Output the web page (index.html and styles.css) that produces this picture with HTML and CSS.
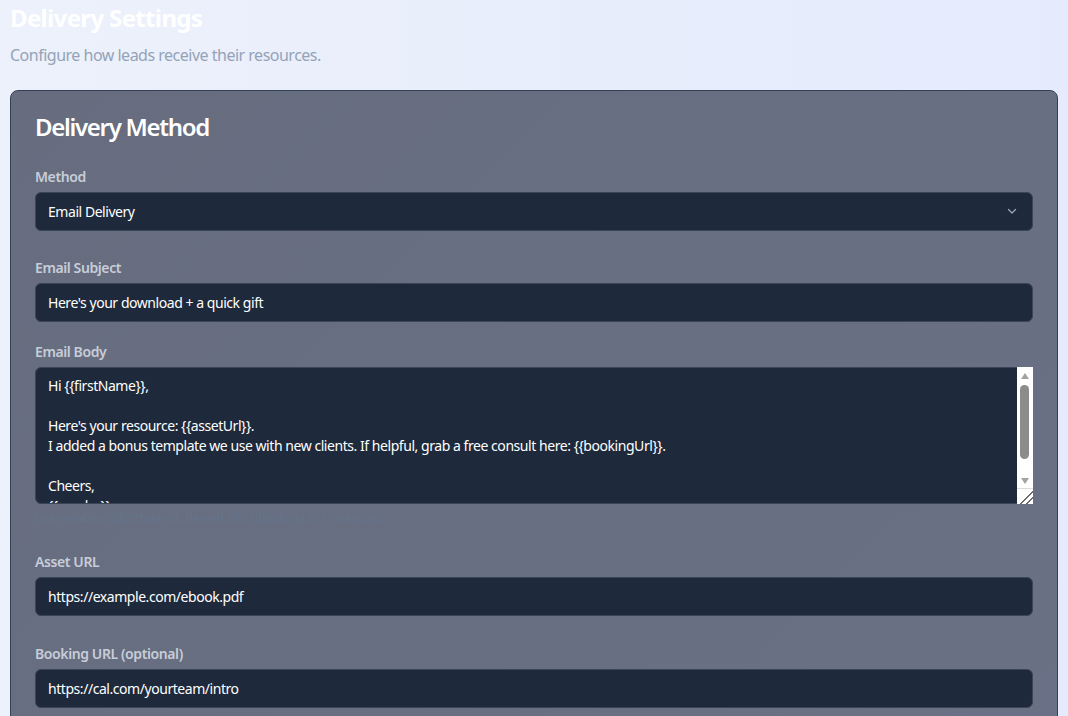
FILE: index.html
```html
<!DOCTYPE html>
<html lang="en">
<head>
<meta charset="utf-8">
<title>Delivery Settings</title>
<link rel="stylesheet" href="styles.css">
</head>
<body>
<main class="page">
  <header class="page-header">
    <h1 class="page-title">Delivery Settings</h1>
    <p class="page-subtitle">Configure how leads receive their resources.</p>
  </header>

  <section class="card">
    <h2 class="card-title">Delivery Method</h2>

    <div class="field field-method">
      <label class="field-label" for="method">Method</label>
      <div class="select-wrap">
        <select id="method" class="control select">
          <option>Email Delivery</option>
          <option>Instant Download</option>
        </select>
        <svg class="select-chevron" viewBox="0 0 12 12" width="12" height="12" aria-hidden="true">
          <path d="M2.5 4.5 L6 8 L9.5 4.5" fill="none" stroke="currentColor" stroke-width="1.4" stroke-linecap="round" stroke-linejoin="round"/>
        </svg>
      </div>
    </div>

    <div class="field field-subject">
      <label class="field-label" for="subject">Email Subject</label>
      <input id="subject" class="control" type="text" value="Here's your download + a quick gift">
    </div>

    <div class="field field-body">
      <label class="field-label" for="body">Email Body</label>
      <div class="textarea-wrap">
        <textarea id="body" class="control textarea">Hi {{firstName}},

Here's your resource: {{assetUrl}}.
I added a bonus template we use with new clients. If helpful, grab a free consult here: {{bookingUrl}}.

Cheers,
{{sender}}</textarea>
        <div class="scrollbar" aria-hidden="true">
          <span class="sb-button"><span class="sb-arrow-up"></span></span>
          <span class="sb-track"><span class="sb-thumb"></span></span>
          <span class="sb-button"><span class="sb-arrow-down"></span></span>
          <span class="sb-resizer"></span>
        </div>
      </div>
      <p class="field-hint">Use variables: {{firstName}}, {{assetUrl}}, {{bookingUrl}}, {{sender}}</p>
    </div>

    <div class="field field-asset">
      <label class="field-label" for="asset">Asset URL</label>
      <input id="asset" class="control" type="text" value="https://example.com/ebook.pdf">
    </div>

    <div class="field field-booking">
      <label class="field-label" for="booking">Booking URL (optional)</label>
      <input id="booking" class="control" type="text" value="https://cal.com/yourteam/intro">
    </div>
  </section>
</main>
</body>
</html>
```

FILE: styles.css
```css
html, body {
  margin: 0;
  padding: 0;
  height: 100%;
  overflow: hidden;
}

body {
  font-family: "Noto Sans", "Open Sans", "Liberation Sans", sans-serif;
  background: linear-gradient(90deg, #ecf1fb 0%, #e9eefc 50%, #e5eafd 100%);
  color: #ffffff;
  letter-spacing: -0.45px;
}

.page {
  padding: 0 10px;
}

.page-header {
  display: flex;
  flex-direction: column;
}

.page-title {
  margin: -1px 0 0;
  font-size: 24px;
  line-height: 38px;
  font-weight: 700;
  letter-spacing: -0.65px;
  color: #ffffff;
}

.page-subtitle {
  margin: 6px 0 0;
  font-size: 16px;
  line-height: 24px;
  letter-spacing: -0.5px;
  color: #94a3b8;
}

.card {
  margin-top: 23px;
  border: 1px solid #334155;
  border-radius: 8px;
  background: linear-gradient(135deg, #676d7f 0%, #686f82 60%, #6a7186 100%);
  padding: 20px 24px 60px;
  display: flex;
  flex-direction: column;
}

.card-title {
  margin: 0 0 24px;
  font-size: 24px;
  line-height: 32px;
  font-weight: 600;
  letter-spacing: -1.3px;
  color: #ffffff;
}

.field {
  display: flex;
  flex-direction: column;
}

.field-subject { margin-top: 27px; }
.field-body { margin-top: 20px; }
.field-asset { margin-top: 25px; }
.field-booking { margin-top: 28px; }

.field-label {
  font-size: 14px;
  line-height: 20px;
  font-weight: 600;
  letter-spacing: -0.4px;
  color: #c7cdd8;
  margin-bottom: 5px;
}

.control {
  box-sizing: border-box;
  width: 100%;
  height: 39px;
  margin: 0;
  padding: 0 12px;
  border: 1px solid #3a4558;
  border-radius: 6px;
  background: #1e293b;
  color: #ffffff;
  font-family: inherit;
  font-size: 14px;
  letter-spacing: -0.45px;
  outline: none;
}

.select-wrap {
  position: relative;
}

.select {
  appearance: none;
  -webkit-appearance: none;
  padding-right: 36px;
}

.select-chevron {
  position: absolute;
  right: 15px;
  top: 13px;
  color: #94a3b8;
  pointer-events: none;
}

.textarea-wrap {
  position: relative;
  display: flex;
}

.textarea {
  display: block;
  height: 137px;
  padding: 8px 12px;
  line-height: 20px;
  resize: none;
  overflow: hidden;
}

/* classic light scrollbar drawn over the textarea's right edge */
.scrollbar {
  position: absolute;
  top: 0;
  right: 0;
  bottom: 0;
  width: 16px;
  background: #ffffff;
  display: flex;
  flex-direction: column;
}

.sb-button {
  height: 17px;
  flex: none;
  display: flex;
  align-items: center;
  justify-content: center;
}

.sb-arrow-up,
.sb-arrow-down {
  width: 0;
  height: 0;
  border-left: 4.5px solid transparent;
  border-right: 4.5px solid transparent;
}

.sb-arrow-up {
  border-bottom: 6px solid #a3a3a3;
}

.sb-arrow-down {
  border-top: 6px solid #a3a3a3;
  margin-top: 2px;
}

.sb-track {
  flex: 1;
  display: flex;
  padding: 1px 0 0 3px;
}

.sb-thumb {
  width: 9px;
  height: 74px;
  border-radius: 5px;
  background: #8c8c8c;
}

.sb-resizer {
  height: 16px;
  flex: none;
  box-sizing: border-box;
  border-top: 1px solid #dcdcdc;
  background: linear-gradient(135deg, #ffffff 0 58%, #6b6b6b 58% 64%, #ffffff 64% 76%, #6b6b6b 76% 82%, #ffffff 82%);
}

.field-hint {
  margin: 5px 0 0;
  font-size: 12px;
  line-height: 18px;
  letter-spacing: -0.4px;
  color: #64748b;
}
```
